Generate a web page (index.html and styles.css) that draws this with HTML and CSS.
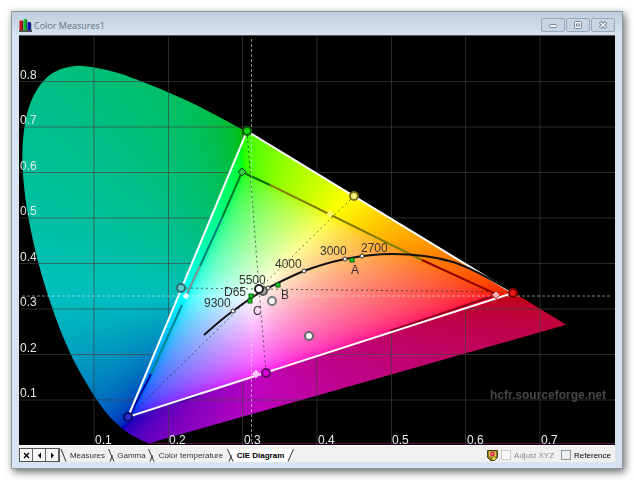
FILE: index.html
```
<!DOCTYPE html>
<html lang="en">
<head>
  <meta charset="UTF-8">
  <title>Color Measures1</title>
  <link rel="stylesheet" href="styles.css">
</head>
<body>
  <main class="window">
    <header class="titlebar">
      <svg class="app-icon" width="13" height="13" viewBox="0 0 13 13" aria-hidden="true">
        <path d="M0 12h13" stroke="#222" stroke-width="1.5"/>
        <rect x="0.5" y="1.5" width="3.5" height="10" rx="1" fill="#c4141c"/>
        <rect x="4.5" y="0" width="3.5" height="11.5" rx="1" fill="#17b92c"/>
        <rect x="8.5" y="3" width="3.5" height="8.5" rx="1" fill="#1010b0"/>
        <path d="M3.8 2v9M7.8 1v10M11.8 4v7" stroke="#222" stroke-width="0.7"/>
      </svg>
      <h1>Color Measures1</h1>
      <div class="window-buttons">
        <button type="button" aria-label="Minimize">
          <svg width="10" height="8" viewBox="0 0 10 8"><rect x="1.5" y="3.5" width="7" height="3" rx="1" fill="#f4f6f8" stroke="#7c8694"/></svg>
        </button>
        <button type="button" aria-label="Maximize">
          <svg width="10" height="8" viewBox="0 0 10 8"><rect x="1.5" y="0.5" width="7" height="7" rx="1" fill="#f4f6f8" stroke="#7c8694"/><rect x="3.5" y="3" width="3" height="2" fill="#fff" stroke="#7c8694"/></svg>
        </button>
        <button type="button" aria-label="Close">
          <svg width="10" height="8" viewBox="0 0 10 8"><path d="M2 1l6 6M8 1L2 7" stroke="#7c8694" stroke-width="3.4"/><path d="M2.4 1.4l5.2 5.2M7.6 1.4L2.4 6.6" stroke="#f4f6f8" stroke-width="1.4"/></svg>
        </button>
      </div>
    </header>

    <section class="chart">
      <canvas id="gamut" width="596" height="409"></canvas>
      <svg viewBox="19 36 596 409" role="img" aria-label="CIE Diagram">
        <!-- the grid stays outside the measured triangle -->
        <clipPath id="outside">
          <path clip-rule="evenodd" d="M19 36H615V445H19ZM247 131L513 293L128 417Z"/>
        </clipPath>
        <g class="grid" clip-path="url(#outside)">
          <path d="M94 36V445M168.5 36V445M242.5 36V445M317 36V445M391.5 36V445M465.5 36V445M540 36V445"/>
          <path d="M19 81.5H615M19 127H615M19 172.5H615M19 218H615M19 263.5H615M19 309H615M19 354.5H615M19 400H615"/>
        </g>
        <path d="M148 443.5H615" stroke="#5c0a50"/>

        <!-- reference gamut -->
        <g class="reference">
          <path d="M242 172L222 218" stroke="#007a26"/>
          <path d="M222 218L200 266" stroke="#008078"/>
          <path d="M200 266L185 298" stroke="#7d8f8f"/>
          <path d="M182 305L151 374" stroke="#008690"/>
          <path d="M151 374L130 415" stroke="#000094"/>
          <path d="M242 172L270 185" stroke="#007000"/>
          <path d="M270 185L422 260" stroke="#827c00"/>
          <path d="M422 260L496 294" stroke="#8c0000"/>
          <path d="M496 295L390 331" stroke="#8c0018"/>
          <path d="M200 395L130 416" stroke="#20009a"/>
        </g>

        <path class="measured" d="M247 131L513 293L128 417Z"/>

        <path class="axis" d="M251.5 39V442M22 296H611"/>
        <path class="link" d="M247 131L259 289L266 373M181 288L259 289L513 292M354 196L259 289L128 417"/>

        <path class="blackbody" d="M204 335C213 327 223 318 233 311C244 303 254 295 268 288C280 282 291 276 304 271C317 266 331 262 345 259C361 256 376 254 392 254C415 254 433 256 453 262C475 269 493 281 513 292"/>

        <g class="diamond">
          <polygon points="242,168 246,172 242,176 238,172" stroke="#064d10" fill="#35c94a"/>
          <polygon points="496,291 500,295 496,299 492,295" stroke="#a33" fill="#ffb0b0"/>
          <polygon points="330,211 333,214 330,217 327,214" stroke="#fff98a" fill="#fff45a"/>
          <polygon points="256,370 260,374 256,378 252,374" stroke="#ffa0ff" fill="#ffc8ff"/>
          <polygon points="186,293 189,296 186,299 183,296" stroke="#dff" fill="#dff"/>
        </g>

        <g class="temperature">
          <circle cx="233" cy="311" r="2"/>
          <circle cx="268" cy="288" r="2"/>
          <circle cx="304" cy="271" r="2"/>
          <circle cx="345" cy="259" r="2"/>
          <circle cx="362" cy="256" r="2"/>
        </g>
        <g class="illuminant">
          <rect x="350" y="258" width="4" height="4"/>
          <rect x="276" y="283" width="4" height="4"/>
          <rect x="249" y="294" width="4" height="4"/>
          <rect x="248" y="299" width="4" height="4"/>
        </g>

        <g class="point">
          <circle cx="247" cy="131" r="4" fill="#12d812" stroke="#045c04"/>
          <circle cx="354" cy="196" r="4" fill="#f6ee78" stroke="#77701c"/>
          <circle cx="513" cy="293" r="4" fill="#e81818" stroke="#7c0000"/>
          <circle cx="266" cy="373" r="4" fill="#d800d8" stroke="#640064"/>
          <circle cx="128" cy="417" r="4" fill="#2c2cd0" stroke="#0a0a60"/>
          <circle cx="181" cy="288" r="4" fill="#62d0d0" stroke="#2c6c74"/>
          <circle cx="263" cy="291" r="4" fill="#aaa" stroke="#555"/>
          <circle cx="259" cy="289" r="4" fill="#fff" stroke="#222"/>
          <circle cx="272" cy="301" r="4" fill="#fff" stroke="#777"/>
          <circle cx="309" cy="336" r="4" fill="#fff" stroke="#666"/>
        </g>

        <g class="note">
          <text x="204" y="307">9300</text>
          <text x="224" y="296">D65</text>
          <text x="239" y="284">5500</text>
          <text x="275" y="268">4000</text>
          <text x="320" y="255">3000</text>
          <text x="361" y="252">2700</text>
          <text x="351" y="274">A</text>
          <text x="281" y="299">B</text>
          <text x="253" y="315">C</text>
        </g>
        <g class="scale">
          <text x="20" y="79">0.8</text>
          <text x="20" y="124">0.7</text>
          <text x="20" y="170">0.6</text>
          <text x="20" y="215">0.5</text>
          <text x="20" y="261">0.4</text>
          <text x="20" y="306">0.3</text>
          <text x="20" y="352">0.2</text>
          <text x="20" y="397">0.1</text>
          <text x="95" y="444">0.1</text>
          <text x="169" y="444">0.2</text>
          <text x="244" y="444">0.3</text>
          <text x="318" y="444">0.4</text>
          <text x="392" y="444">0.5</text>
          <text x="467" y="444">0.6</text>
          <text x="541" y="444">0.7</text>
        </g>
        <text class="credit" x="490" y="399">hcfr.sourceforge.net</text>
      </svg>
    </section>

    <footer class="tabbar">
      <div class="tab-nav">
        <button type="button" aria-label="Close tab"><svg width="7" height="7" viewBox="0 0 7 7"><path d="M1 1l5 5M6 1L1 6" stroke="#000" stroke-width="1.3"/></svg></button>
        <button type="button" aria-label="Previous tab"><svg width="7" height="7" viewBox="0 0 7 7"><path d="M5 0.5v6L2 3.5z"/></svg></button>
        <button type="button" aria-label="Next tab"><svg width="7" height="7" viewBox="0 0 7 7"><path d="M2 0.5v6L5 3.5z"/></svg></button>
      </div>
      <nav class="tabs">
        <svg class="edge" width="7" height="13" viewBox="0 0 7 13"><path d="M1 0l5 12.5"/></svg>
        <button type="button" class="tab measures">Measures</button>
        <svg class="edge" width="7" height="13" viewBox="0 0 7 13"><path d="M0.5 0l5.5 12.5M2 12.5l2.5-6"/></svg>
        <button type="button" class="tab gamma">Gamma</button>
        <svg class="edge" width="7" height="13" viewBox="0 0 7 13"><path d="M0.5 0l5.5 12.5M2 12.5l2.5-6"/></svg>
        <button type="button" class="tab temp">Color temperature</button>
        <svg class="edge" width="7" height="13" viewBox="0 0 7 13"><path d="M0.5 0H7v13H6z" class="fill"/><path d="M0.5 0l5.5 12.5M2 12.5l2.5-6"/></svg>
        <button type="button" class="tab active">CIE Diagram</button>
        <svg class="edge" width="7" height="13" viewBox="0 0 7 13"><path d="M0 0h6.5L1 13H0z" class="fill"/><path d="M6.5 0L1 12.5"/></svg>
      </nav>
      <div class="options">
        <svg width="11" height="11" viewBox="0 0 11 11" aria-hidden="true">
          <path d="M0.5 0.5h10v7l-3 3h-4l-3-3z" fill="#8a7c20" stroke="#4a4410"/>
          <rect x="2" y="1.5" width="7" height="5" fill="#e8c060"/>
          <circle cx="5.5" cy="4" r="2.3" fill="#e02030"/>
          <circle cx="5.5" cy="4" r="0.8" fill="#fff"/>
          <circle cx="7" cy="8.5" r="1.6" fill="#e8e040"/>
        </svg>
        <input type="checkbox" id="adjust" disabled>
        <label for="adjust" class="disabled">Adjust XYZ</label>
        <input type="checkbox" id="reference">
        <label for="reference">Reference</label>
      </div>
    </footer>
  </main>
  <script src="gamut.js"></script>
</body>
</html>
```
FILE: styles.css
```
* {
  box-sizing: border-box;
}
body {
  margin: 0;
  padding: 11px;
  background-color: #fff;
  font-family: "Liberation Sans", Arial, sans-serif;
}
.window {
  padding: 0 7px 6px;
  border: 1px solid #8e969e;
  background-color: #d7e3f0;
  box-shadow: 2px 3px 8px rgba(0, 0, 0, 0.6);
}
.titlebar {
  display: flex;
  align-items: center;
  height: 23px;
  margin: 0 -7px;
  padding: 3px 7px 0;
  background: linear-gradient(#bfcddc, #d7e3f0);
}
.titlebar h1 {
  flex: 1;
  margin: 0 0 0 2px;
  font-family: "Open Sans", sans-serif;
  font-size: 9px;
  line-height: 13px;
  font-weight: normal;
  color: #65707e;
}
.window-buttons {
  display: flex;
  gap: 1px;
}
button {
  display: flex;
  align-items: center;
  justify-content: center;
  padding: 0;
  font-family: inherit;
}
.window-buttons button {
  width: 24px;
  height: 14px;
  border: 1px solid #98a7bb;
  border-radius: 2px;
  background-color: #c6d4e3;
}

/* chart */
.chart {
  display: grid;
  border-top: 1px solid #555;
  background-color: #000;
}
.chart canvas,
.chart svg {
  grid-area: 1 / 1;
  display: block;
  width: 100%;
  height: auto;
}
.chart path {
  fill: none;
}
.grid path {
  stroke: rgba(64, 64, 64, 0.65);
}
.reference path {
  stroke-width: 2;
}
.chart .measured {
  stroke: #fff;
  stroke-width: 2;
}
.chart .axis {
  stroke: rgba(225, 225, 225, 0.6);
  stroke-dasharray: 3 2;
}
.chart .link {
  stroke: rgba(40, 40, 40, 0.7);
  stroke-dasharray: 2 3;
}
.chart .blackbody {
  stroke: #111;
  stroke-width: 2;
}
.temperature circle {
  fill: #fff;
  stroke: #333;
}
.illuminant rect {
  fill: #14d01c;
  stroke: #0a5c10;
}
.point circle {
  stroke-width: 2;
}
.chart text {
  font-size: 12px;
}
.note text {
  fill: #333;
}
.scale text {
  fill: #e2ece8;
}
.chart .credit {
  font-weight: bold;
  fill: #474747;
}

/* bottom bar */
.tabbar {
  display: flex;
  align-items: center;
  height: 17px;
  padding-top: 2px;
  border-top: 1px solid #fff;
  background-color: #f0f0f0;
}
.tab-nav {
  display: flex;
  border: 1px solid #555;
}
.tab-nav button {
  width: 13px;
  height: 12px;
  border: 0;
  border-right: 1px solid #666;
  background-color: #f6f6f6;
}
.tabs {
  display: flex;
  align-items: center;
}
.edge {
  flex: none;
}
.edge path {
  fill: none;
  stroke: #333;
}
.edge .fill {
  fill: #fff;
  stroke: none;
}
.tab {
  height: 13px;
  border: 0;
  background: none;
  font-size: 8px;
  line-height: 13px;
  white-space: nowrap;
  color: #333;
}
.measures {
  width: 41px;
}
.gamma {
  width: 33px;
}
.temp {
  width: 72px;
}
.active {
  width: 53px;
  background-color: #fff;
  font-weight: bold;
  color: #000;
}
.options {
  display: flex;
  align-items: center;
  margin-left: auto;
  padding-right: 4px;
  font-size: 8px;
  line-height: 13px;
}
.options label {
  margin-left: 3px;
}
.options .disabled {
  color: #8d8d8d;
}
.options input {
  appearance: none;
  width: 10px;
  height: 10px;
  margin: 0 0 0 7px;
  border: 1px solid #8f959b;
  background-color: #eceff1;
}
.options input:disabled {
  margin-left: 3px;
  border-color: #ccc;
  background-color: #fafafa;
}
```
FILE: gamut.js
```
// chromaticity <-> canvas pixels
const SCALE_X = 744;
const SCALE_Y = 455;
const ZERO_X = 0.6;
const ZERO_Y = 409.5;

// spectral locus, 380nm to 700nm
const locus = [
  [0.1741, 0.0050], [0.1644, 0.0109], [0.1566, 0.0177], [0.1440, 0.0297],
  [0.1241, 0.0578], [0.1096, 0.0868], [0.0913, 0.1327], [0.0687, 0.2007],
  [0.0454, 0.2950], [0.0235, 0.4127], [0.0082, 0.5384], [0.0039, 0.6548],
  [0.0139, 0.7502], [0.0389, 0.8120], [0.0743, 0.8338], [0.1142, 0.8262],
  [0.1547, 0.8059], [0.2296, 0.7543], [0.3016, 0.6923], [0.3731, 0.6245],
  [0.4441, 0.5547], [0.5125, 0.4866], [0.5752, 0.4242], [0.6270, 0.3725],
  [0.6658, 0.3340], [0.7347, 0.2653]
];
const measured = [[0.3056, 0.691], [0.663, 0.335], [0.1457, 0.0626]];
const rec709 = [[0.3, 0.6], [0.64, 0.33], [0.15, 0.06]];
const white = [0.3127, 0.329];

const canvas = document.getElementById('gamut');
const ctx = canvas.getContext('2d');

function xyToRgb(x, y) {
  const X = x / y;
  const Z = (1 - x - y) / y;
  const rgb = [
    3.2406 * X - 1.5372 - 0.4986 * Z,
    -0.9689 * X + 1.8758 + 0.0415 * Z,
    0.0557 * X - 0.2040 + 1.0570 * Z
  ];
  const max = Math.max(...rgb);
  return rgb.map(v => 255 * Math.pow(Math.max(v, 0) / max, 1 / 2.2));
}

// pull a point towards white until it is inside the rec709 triangle
function fitToRec709(x, y) {
  const dx = x - white[0];
  const dy = y - white[1];
  let t = 1;
  for (let i = 0; i < 3; i++) {
    const [ax, ay] = rec709[i];
    const [bx, by] = rec709[(i + 1) % 3];
    const ex = bx - ax;
    const ey = by - ay;
    const hit = ((ax - white[0]) * ey - (ay - white[1]) * ex) / (dx * ey - dy * ex);
    if (hit > 0) t = Math.min(t, hit);
  }
  return [white[0] + dx * t, white[1] + dy * t];
}

function paintColors() {
  const layer = document.createElement('canvas');
  layer.width = canvas.width;
  layer.height = canvas.height;
  const layerCtx = layer.getContext('2d');
  const image = layerCtx.createImageData(layer.width, layer.height);
  for (let py = 0; py < layer.height; py++) {
    for (let px = 0; px < layer.width; px++) {
      const [x, y] = fitToRec709((px - ZERO_X) / SCALE_X, (ZERO_Y - py) / SCALE_Y);
      const rgb = xyToRgb(x, y);
      const i = (py * layer.width + px) * 4;
      image.data[i] = rgb[0];
      image.data[i + 1] = rgb[1];
      image.data[i + 2] = rgb[2];
      image.data[i + 3] = 255;
    }
  }
  layerCtx.putImageData(image, 0, 0);
  return layer;
}

// split every side into short steps along a Catmull-Rom curve
function smooth(points) {
  const out = [];
  for (let i = 0; i < points.length - 1; i++) {
    const p0 = points[Math.max(i - 1, 0)];
    const p1 = points[i];
    const p2 = points[i + 1];
    const p3 = points[Math.min(i + 2, points.length - 1)];
    for (let t = 0; t < 1; t += 0.125) {
      out.push([0, 1].map(k => 0.5 * (2 * p1[k] + (p2[k] - p0[k]) * t
        + (2 * p0[k] - 5 * p1[k] + 4 * p2[k] - p3[k]) * t * t
        + (3 * p1[k] - p0[k] - 3 * p2[k] + p3[k]) * t * t * t)));
    }
  }
  out.push(points[points.length - 1]);
  return out;
}

function drawClipped(layer, points, alpha) {
  ctx.save();
  ctx.beginPath();
  points.forEach(([x, y]) => ctx.lineTo(ZERO_X + x * SCALE_X, ZERO_Y - y * SCALE_Y));
  ctx.closePath();
  ctx.clip();
  ctx.globalAlpha = alpha;
  ctx.drawImage(layer, 0, 0);
  ctx.restore();
}

const colors = paintColors();
drawClipped(colors, smooth(locus), 0.75);
drawClipped(colors, measured, 1);
```
